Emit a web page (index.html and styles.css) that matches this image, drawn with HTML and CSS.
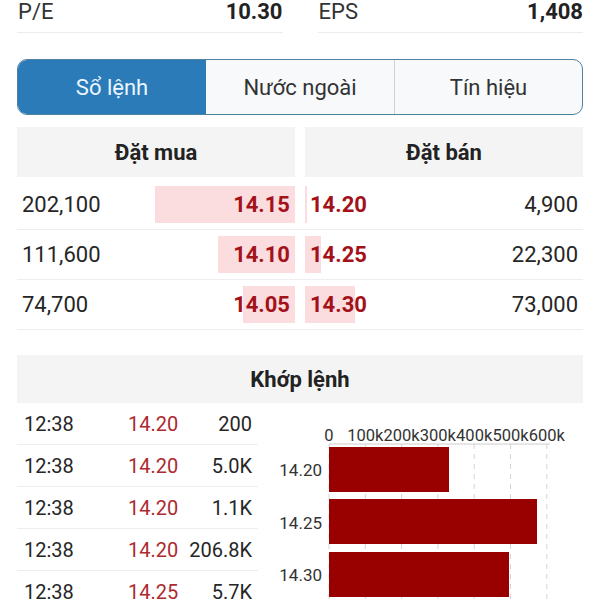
FILE: index.html
```html
<!DOCTYPE html>
<html lang="vi">
<head>
    <meta charset="UTF-8">
    <title>Sổ lệnh</title>
    <link rel="stylesheet" href="styles.css">
</head>
<body>
    <div class="page">
        <div class="stats">
            <div class="stat">
                <span class="stat-label">P/E</span>
                <span class="stat-value">10.30</span>
            </div>
            <div class="stat">
                <span class="stat-label">EPS</span>
                <span class="stat-value">1,408</span>
            </div>
        </div>

        <div class="tabs">
            <button class="tab active">Sổ lệnh</button>
            <button class="tab">Nước ngoài</button>
            <button class="tab">Tín hiệu</button>
        </div>

        <div class="book">
            <div class="book-row book-head">
                <div class="head-cell">Đặt mua</div>
                <div class="head-cell">Đặt bán</div>
            </div>
            <div class="book-row">
                <div class="cell buy">
                    <span class="depth" style="width: 140px"></span>
                    <span class="qty">202,100</span>
                    <span class="price">14.15</span>
                </div>
                <div class="cell sell">
                    <span class="depth" style="width: 2px"></span>
                    <span class="price">14.20</span>
                    <span class="qty">4,900</span>
                </div>
            </div>
            <div class="book-row">
                <div class="cell buy">
                    <span class="depth" style="width: 77px"></span>
                    <span class="qty">111,600</span>
                    <span class="price">14.10</span>
                </div>
                <div class="cell sell">
                    <span class="depth" style="width: 16px"></span>
                    <span class="price">14.25</span>
                    <span class="qty">22,300</span>
                </div>
            </div>
            <div class="book-row">
                <div class="cell buy">
                    <span class="depth" style="width: 52px"></span>
                    <span class="qty">74,700</span>
                    <span class="price">14.05</span>
                </div>
                <div class="cell sell">
                    <span class="depth" style="width: 50px"></span>
                    <span class="price">14.30</span>
                    <span class="qty">73,000</span>
                </div>
            </div>
        </div>

        <div class="match">
            <div class="match-head">Khớp lệnh</div>
            <div class="match-body">
                <div class="trades">
                    <div class="trade"><span>12:38</span><span class="trade-price">14.20</span><span class="trade-vol">200</span></div>
                    <div class="trade"><span>12:38</span><span class="trade-price">14.20</span><span class="trade-vol">5.0K</span></div>
                    <div class="trade"><span>12:38</span><span class="trade-price">14.20</span><span class="trade-vol">1.1K</span></div>
                    <div class="trade"><span>12:38</span><span class="trade-price">14.20</span><span class="trade-vol">206.8K</span></div>
                    <div class="trade"><span>12:38</span><span class="trade-price">14.25</span><span class="trade-vol">5.7K</span></div>
                </div>

                <!-- khối lượng theo giá -->
                <svg class="chart" width="325" height="197" viewBox="0 0 325 197">
                    <g class="grid">
                        <line x1="71" y1="41" x2="71" y2="197"></line>
                        <line x1="107.3" y1="41" x2="107.3" y2="197"></line>
                        <line x1="143.6" y1="41" x2="143.6" y2="197"></line>
                        <line x1="179.9" y1="41" x2="179.9" y2="197"></line>
                        <line x1="216.2" y1="41" x2="216.2" y2="197"></line>
                        <line x1="252.5" y1="41" x2="252.5" y2="197"></line>
                        <line x1="288.8" y1="41" x2="288.8" y2="197"></line>
                    </g>
                    <line class="axis" x1="71" y1="41" x2="292" y2="41"></line>
                    <g class="x-labels">
                        <text x="71" y="38">0</text>
                        <text x="107.3" y="38">100k</text>
                        <text x="143.6" y="38">200k</text>
                        <text x="179.9" y="38">300k</text>
                        <text x="216.2" y="38">400k</text>
                        <text x="252.5" y="38">500k</text>
                        <text x="288.8" y="38">600k</text>
                    </g>
                    <g class="bars">
                        <rect x="71" y="44" width="120" height="45"></rect>
                        <rect x="71" y="96" width="208" height="45"></rect>
                        <rect x="71" y="149" width="180" height="45"></rect>
                    </g>
                    <g class="y-labels">
                        <text x="64" y="73">14.20</text>
                        <text x="64" y="126">14.25</text>
                        <text x="64" y="178">14.30</text>
                    </g>
                </svg>
            </div>
        </div>
    </div>
</body>
</html>
```

FILE: styles.css
```css
body {
    margin: 0;
    padding: 0;
    background-color: #fff;
    color: #262626;
    font-family: Roboto, "Noto Sans", Arial, sans-serif;
    overflow: hidden;
}
.page {
    padding: 0 17px;
}
.stats {
    display: grid;
    grid-template-columns: 1fr 1fr;
    column-gap: 35px;
}
.stat {
    display: flex;
    justify-content: space-between;
    font-size: 22px;
    line-height: 24px;
    padding-bottom: 8px;
    border-bottom: 1px solid #ececec;
}
.stat-label {
    padding-left: 1px;
    color: #333;
}
.stat-value {
    font-weight: bold;
    color: #222;
}
.tabs {
    display: grid;
    grid-template-columns: 1fr 1fr 1fr;
    margin-top: 26px;
    height: 56px;
    box-sizing: border-box;
    border: 1.5px solid #50809f;
    border-radius: 10px;
    overflow: hidden;
    background-color: #f8f9fa;
}
.tab {
    border: none;
    background: none;
    font-family: inherit;
    font-size: 22px;
    color: #333;
    padding: 0;
}
.tab + .tab {
    border-left: 1px solid #cfd4d8;
}
.tab.active {
    background-color: #2b7bb9;
    color: #eaf5ff;
}
.tab.active + .tab {
    border-left: none;
}
.book {
    margin-top: 12px;
}
.book-row {
    display: grid;
    grid-template-columns: 1fr 1fr;
    column-gap: 10px;
    height: 50px;
    box-sizing: border-box;
    border-bottom: 1px solid #eeeeee;
}
.book-head {
    border-bottom: none;
    margin-bottom: 3px;
}
.head-cell {
    background-color: #f4f4f4;
    display: flex;
    align-items: center;
    justify-content: center;
    font-size: 22px;
    font-weight: bold;
    color: #222;
}
.cell {
    position: relative;
    display: flex;
    align-items: center;
    justify-content: space-between;
    padding: 0 5px;
    font-size: 22px;
}
.depth {
    position: absolute;
    top: 6px;
    bottom: 6px;
    background-color: #fbdcdf;
}
.buy .depth {
    right: 0;
}
.sell .depth {
    left: 0;
}
.qty,
.price {
    position: relative;
}
.qty {
    color: #262626;
}
.price {
    font-weight: bold;
    color: #a3121a;
}
.match {
    margin-top: 25px;
}
.match-head {
    height: 48px;
    background-color: #f4f4f4;
    display: flex;
    align-items: center;
    justify-content: center;
    font-size: 22px;
    font-weight: bold;
    color: #222;
}
.match-body {
    display: flex;
}
.trades {
    width: 241px;
    flex-shrink: 0;
}
.trade {
    display: grid;
    grid-template-columns: 104px 1fr auto;
    align-items: center;
    height: 42px;
    box-sizing: border-box;
    padding: 0 6px 0 7px;
    border-bottom: 1px solid #eeeeee;
    font-size: 20px;
}
.trade-price {
    color: #ad2a30;
}
.trade-vol {
    text-align: right;
}
.chart {
    display: block;
    flex-shrink: 0;
}
.chart text {
    font-family: Roboto, "Noto Sans", Arial, sans-serif;
    fill: #333;
}
.grid line {
    stroke: #d4d4d4;
    stroke-width: 1;
    stroke-dasharray: 5 5;
}
.axis {
    stroke: #cccccc;
    stroke-width: 1;
}
.x-labels text {
    font-size: 16.5px;
    text-anchor: middle;
}
.y-labels text {
    font-size: 17px;
    text-anchor: end;
}
.bars rect {
    fill: #990000;
}
```
